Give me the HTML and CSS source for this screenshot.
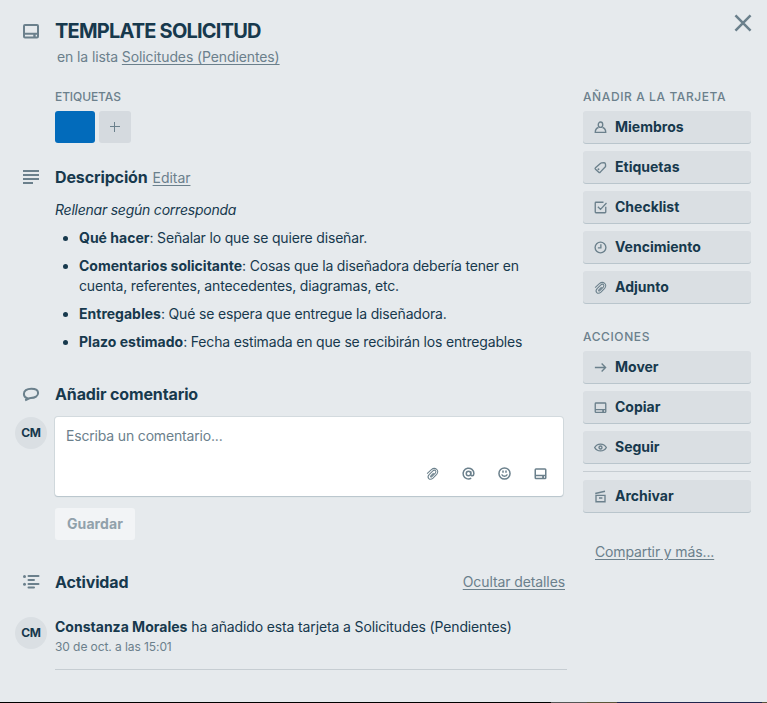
FILE: index.html
```html
<!DOCTYPE html>
<html lang="es">
<head>
<meta charset="utf-8">
<title>TEMPLATE SOLICITUD</title>
<link rel="stylesheet" href="styles.css">
</head>
<body>
<svg class="sprite" aria-hidden="true">
  <symbol id="card" viewBox="0 0 20 20"><path d="M4 4h12a1 1 0 0 1 1 1v10.500a1 1 0 0 1-1 1H4a1 1 0 0 1-1-1V5a1 1 0 0 1 1-1zM3 12.800h14M13.300 13v3.500"/><path class="solid" d="M13 13h1.500v4H13z"/></symbol>
  <symbol id="text" viewBox="0 0 20 20"><path d="M2 4h16M2 8h16M2 12h16M2 16h10"/></symbol>
  <symbol id="comment" viewBox="0 0 20 20"><path d="M4.200 16.200c1-.4 1.800-1 2-2.100C3.900 13.500 2.900 12 2.900 9.900c0-3.100 2.800-5.100 7.400-5.100 4.200 0 6.800 1.500 6.800 4.300 0 2.800-3 4.800-7.300 4.900-1.800.1-3.600 1.700-5.600 2.200z"/></symbol>
  <symbol id="activity" viewBox="0 0 20 20"><path d="M7.500 4h10M7.500 8h5.500M7.500 12h10M7.500 15.500h5.500" stroke-linecap="round"/><circle class="solid" cx="3.500" cy="4.500" r="1.500"/><circle class="solid" cx="3.500" cy="12.300" r="1.500"/></symbol>
  <symbol id="member" viewBox="0 0 20 20"><ellipse cx="10" cy="6.300" rx="3" ry="3.600"/><path d="M7.300 10C4.400 11 3 13 3 16.500h14c0-3.500-1.400-5.500-4.300-6.500"/></symbol>
  <symbol id="label" viewBox="0 0 20 20"><path d="M10.200 4.500q.5-.5 1.300-.6l3.300-.3q1.600 0 1.800 1.700l.2 2.600q0 .9-.6 1.500l-6.500 6.800q-1 1-2 0L3.300 12.300q-1-1 0-2z"/><circle class="solid" cx="7.300" cy="12.300" r="1.300"/></symbol>
  <symbol id="check" viewBox="0 0 20 20"><path d="M14 3H4a1 1 0 0 0-1 1v12a1 1 0 0 0 1 1h12a1 1 0 0 0 1-1V9M6.500 9l3.500 3.500L18 4"/></symbol>
  <symbol id="clock" viewBox="0 0 20 20"><circle cx="10" cy="10" r="7.200"/><path d="M10.500 5.500V10.500H6.500"/></symbol>
  <symbol id="clip" viewBox="0 0 20 20"><path stroke-width="1.400" d="M2.800 10.200l5.700-5.300c5-4.300 11.500 1.300 7 6.300l-4.800 5c-4.500 3.600-8.800-.6-5.200-4.800l5-5c2.800-2.200 5.400.7 3.200 3.200l-4.600 4.700c-1.200 1-2.200-.2-1.300-1.200l3.700-3.700"/></symbol>
  <symbol id="arrow" viewBox="0 0 20 20"><path d="M2.500 10h14M11.500 4.700l5.300 5.300-5.300 5.300"/></symbol>
  <symbol id="eye" viewBox="0 0 20 20"><path d="M2.200 10C5.500 3.900 14.500 3.900 17.800 10C14.500 16.100 5.500 16.100 2.200 10z"/><circle cx="10" cy="10" r="2"/></symbol>
  <symbol id="archive" viewBox="0 0 20 20"><path d="M4 8.500h12v8.500H4zM3 6l13-3M8 12h4.500"/></symbol>
  <symbol id="at" viewBox="0 0 20 20"><circle cx="10" cy="10" r="3"/><path d="M13 7v4c0 3 4.200 2.800 4.200-1A7.200 7.200 0 1 0 13.600 16.300"/></symbol>
  <symbol id="smile" viewBox="0 0 20 20"><circle cx="10" cy="10" r="7.400"/><path d="M8 6v3M12 6v3M6.300 11.200c1 3.300 6.400 3.300 7.400 0"/></symbol>
  <symbol id="close" viewBox="0 0 20 20"><path d="M3.700 3.700l12.600 12.600M16.300 3.700L3.700 16.300"/></symbol>
</svg>
<div class="dialog">
  <button class="close" aria-label="Cerrar"><svg><use href="#close"/></svg></button>
  <header class="row title-row">
    <svg class="icon"><use href="#card"/></svg>
    <div>
      <h1>TEMPLATE SOLICITUD</h1>
      <p class="in-list">en la lista <a>Solicitudes (Pendientes)</a></p>
    </div>
  </header>
  <div class="columns">
    <main>
      <section class="labels">
        <h4>ETIQUETAS</h4>
        <div class="swatches"><span class="swatch"></span><button class="add"></button></div>
      </section>
      <div class="row heading desc-heading"><svg class="icon"><use href="#text"/></svg><h3>Descripción</h3><a class="edit">Editar</a></div>
      <section class="description">
        <p>Rellenar según corresponda</p>
        <ul>
          <li><b>Qué hacer</b>: Señalar lo que se quiere diseñar.</li>
          <li><b>Comentarios solicitante</b>: Cosas que la diseñadora debería tener en<br>cuenta, referentes, antecedentes, diagramas, etc.</li>
          <li><b>Entregables</b>: Qué se espera que entregue la diseñadora.</li>
          <li><b>Plazo estimado</b>: Fecha estimada en que se recibirán los entregables</li>
        </ul>
      </section>
      <div class="row heading comment-heading"><svg class="icon"><use href="#comment"/></svg><h3>Añadir comentario</h3></div>
      <div class="row comment">
        <span class="avatar">CM</span>
        <div class="box">
          <span class="placeholder">Escriba un comentario...</span>
          <div class="tools"><svg><use href="#clip"/></svg><svg><use href="#at"/></svg><svg><use href="#smile"/></svg><svg><use href="#card"/></svg></div>
        </div>
      </div>
      <button class="save">Guardar</button>
      <div class="row heading activity-heading"><svg class="icon"><use href="#activity"/></svg><h3>Actividad</h3><a class="hide">Ocultar detalles</a></div>
      <div class="row entry">
        <span class="avatar">CM</span>
        <div class="entry-body">
          <p class="what"><b>Constanza Morales</b> ha añadido esta tarjeta a Solicitudes (Pendientes)</p>
          <p class="date">30 de oct. a las 15:01</p>
        </div>
      </div>
    </main>
    <aside>
      <h4>AÑADIR A LA TARJETA</h4>
      <button class="action"><svg><use href="#member"/></svg><span>Miembros</span></button>
      <button class="action"><svg><use href="#label"/></svg><span>Etiquetas</span></button>
      <button class="action"><svg><use href="#check"/></svg><span>Checklist</span></button>
      <button class="action"><svg><use href="#clock"/></svg><span>Vencimiento</span></button>
      <button class="action"><svg><use href="#clip"/></svg><span>Adjunto</span></button>
      <h4 class="second">ACCIONES</h4>
      <button class="action"><svg><use href="#arrow"/></svg><span>Mover</span></button>
      <button class="action"><svg><use href="#card"/></svg><span>Copiar</span></button>
      <button class="action"><svg><use href="#eye"/></svg><span>Seguir</span></button>
      <hr>
      <button class="action"><svg><use href="#archive"/></svg><span>Archivar</span></button>
      <a class="share">Compartir y más...</a>
    </aside>
  </div>
</div>
<div class="backdrop"></div>
</body>
</html>
```
FILE: styles.css
```css
* { box-sizing: border-box; margin: 0; padding: 0; }
body {
  width: 767px; height: 703px; overflow: hidden;
  background: #e6eaed; color: #17394d;
  font: 14px/20px Inter, "Liberation Sans", sans-serif;
  letter-spacing: -0.17px;
}
button { border: 0; font: inherit; letter-spacing: inherit; color: inherit; text-align: left; }
a { text-decoration: underline; color: #6b808c; text-underline-offset: 2px; }
b { font-weight: 700; letter-spacing: 0.01px; }
svg { display: block; fill: none; stroke: #6b808c; stroke-width: 2; }
.solid { fill: #6b808c; stroke: none; }
.sprite { position: absolute; width: 0; height: 0; }
.dialog { height: 702px; padding: 19px 16px 0 15px; }
.backdrop { height: 1px; background: linear-gradient(90deg, #000 551px, #555 551px 587px, #5b5439 587px 617px, #20254d 617px 762px, #5b5439 762px); }
.close { position: absolute; left: 731px; top: 11px; background: none; }
.close svg { width: 24px; height: 24px; stroke-width: 2.1; }
.row { display: flex; }
.icon { width: 20px; height: 20px; margin: 0 14px 0 6px; flex: none; }
.title-row { height: 68px; }
.title-row .icon { margin-top: 2px; }
h1 { font-size: 20px; line-height: 24px; font-weight: 700; letter-spacing: -0.8px; }
.in-list { margin: 4px 0 0 2px; color: #6b808c; letter-spacing: -0.11px; }
.columns { display: grid; grid-template-columns: 552px 168px; gap: 16px; }
h4 { font-size: 12px; line-height: 20px; font-weight: 500; color: #6b808c; letter-spacing: -0.1px; margin-bottom: 4px; }
.labels { padding-left: 40px; }
.swatches { display: flex; gap: 4px; }
.swatch { width: 40px; height: 32px; border-radius: 3px; background: #026bbb; }
.add { width: 32px; height: 32px; border-radius: 3px;
  background: linear-gradient(#6b808c, #6b808c) 11px 15px/10px 1px no-repeat, linear-gradient(#6b808c, #6b808c) 15px 11px/1px 10px no-repeat, #d5dadf; }
.heading { height: 32px; align-items: center; }
h3 { font-size: 16px; line-height: 32px; font-weight: 700; letter-spacing: -0.13px; }
.desc-heading { margin-top: 18px; }
.edit { margin: 1px 0 0 5px; letter-spacing: -0.05px; }
.description { padding: 7px 0 0 40px; }
.description p { font-style: italic; letter-spacing: -0.23px; }
.description ul { padding-left: 24px; }
.description li { margin-top: 8px; }
.comment-heading { margin-top: 26px; }
.comment { margin-top: 7px; }
.avatar { width: 32px; height: 32px; border-radius: 50%; margin-right: 8px; flex: none; background: #dadfe3; font-size: 12px; line-height: 32px; font-weight: 700; text-align: center; }
.box { width: 508px; height: 79px; background: #fff; border-radius: 3px; box-shadow: 0 1px 1px #b9c5cc, 0 0 0 1px #d3dade; padding: 9px 11px; display: flex; flex-direction: column; justify-content: space-between; }
.placeholder { color: #6b808c; }
.tools { display: flex; justify-content: flex-end; gap: 21px; padding: 0 4px 6px 0; }
.tools svg { width: 15px; height: 15px; }
.save { display: block; width: 80px; height: 32px; margin: 12px 0 0 40px; border-radius: 3px; background: #f2f4f6; color: #91a1ab; font-weight: 700; letter-spacing: 0.1px; text-align: center; }
.activity-heading { margin-top: 26px; padding-right: 2px; }
.hide { margin-left: auto; letter-spacing: -0.1px; }
.entry { margin-top: 19px; }
.entry-body { width: 512px; height: 53px; border-bottom: 1px solid #c6cdd2; }
.what { letter-spacing: -0.13px; }
.date { color: #6b808c; font-size: 12px; line-height: 20px; letter-spacing: -0.08px; }
aside h4 { letter-spacing: 0.6px; }
.action { display: flex; align-items: center; width: 168px; height: 32px; margin-bottom: 8px; padding-left: 10px; border-radius: 3px; background: #dadfe3; box-shadow: 0 1px 0 #b9c5cc; font-weight: 700; letter-spacing: 0; }
.action svg { width: 15px; height: 15px; margin-right: 7px; stroke-width: 1.8; }
.second { margin-top: 24px; }
hr { border: 0; height: 1px; background: #c6cdd2; margin-bottom: 8px; }
.share { display: block; margin: 30px 0 0 12px; letter-spacing: -0.13px; }
```
